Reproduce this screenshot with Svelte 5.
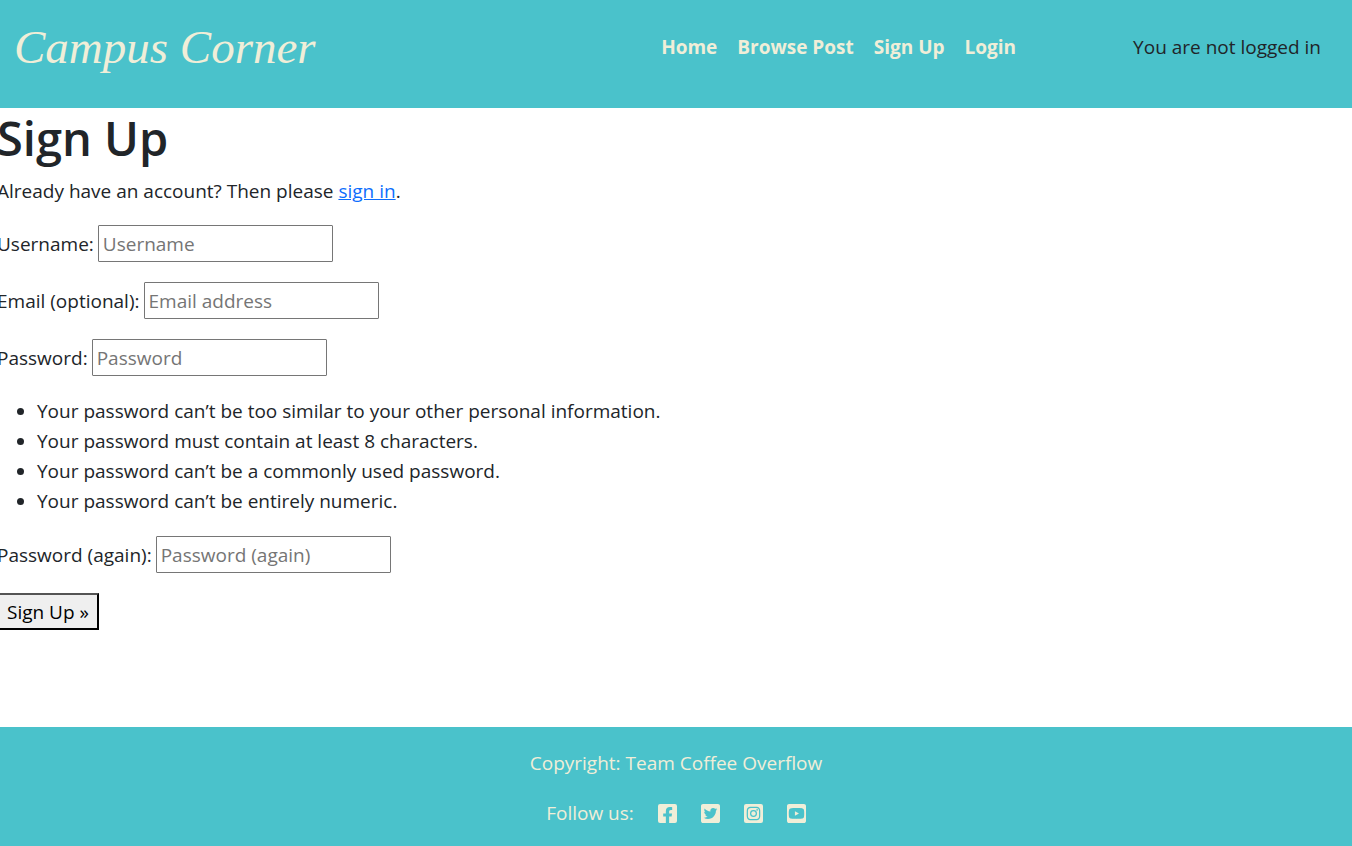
<script>
  const navLinks = ['Home', 'Browse Post', 'Sign Up', 'Login'];

  const passwordRules = [
    'Your password can’t be too similar to your other personal information.',
    'Your password must contain at least 8 characters.',
    'Your password can’t be a commonly used password.',
    'Your password can’t be entirely numeric.'
  ];

  const socials = [
    {
      name: 'Facebook',
      path: 'M400 32H48A48 48 0 0 0 0 80v352a48 48 0 0 0 48 48h137.25V327.69h-63V256h63v-54.64c0-62.15 37-96.48 93.67-96.48 27.14 0 55.52 4.84 55.52 4.84v61h-31.27c-30.81 0-40.42 19.12-40.42 38.73V256h68.78l-11 71.69h-57.78V480H400a48 48 0 0 0 48-48V80a48 48 0 0 0-48-48z'
    },
    {
      name: 'Twitter',
      path: 'M400 32H48C21.5 32 0 53.5 0 80v352c0 26.5 21.5 48 48 48h352c26.5 0 48-21.5 48-48V80c0-26.5-21.5-48-48-48zm-48.9 158.8c.2 2.8.2 5.7.2 8.5 0 86.7-66 186.6-186.6 186.6-37.2 0-71.7-10.8-100.7-29.4 5.3.6 10.4.8 15.8.8 30.7 0 58.9-10.4 81.4-28-28.8-.6-53-19.5-61.3-45.5 10.1 1.5 19.2 1.5 29.6-1.2-30-6.1-52.5-32.5-52.5-64.4v-.8c8.7 4.9 18.9 7.9 29.6 8.3a65.447 65.447 0 0 1-29.2-54.6c0-12.2 3.2-23.4 8.9-33.1 32.3 39.8 80.8 65.8 135.2 68.6-9.3-44.5 24-80.6 64-80.6 18.9 0 35.9 7.9 47.9 20.7 14.8-2.8 29-8.3 41.6-15.8-4.9 15.2-15.2 28-28.8 36.1 13.2-1.4 26-5.1 37.8-10.2-8.9 13.1-20.1 24.7-32.9 34z'
    },
    {
      name: 'Instagram',
      path: 'M224,202.66A53.34,53.34,0,1,0,277.36,256,53.38,53.38,0,0,0,224,202.66Zm124.71-41a54,54,0,0,0-30.41-30.41c-21-8.29-71-6.43-94.3-6.43s-73.25-1.93-94.31,6.43a54,54,0,0,0-30.41,30.41c-8.28,21-6.43,71.05-6.43,94.33S91,329.26,99.32,350.33a54,54,0,0,0,30.41,30.41c21,8.29,71,6.43,94.31,6.43s73.24,1.93,94.3-6.43a54,54,0,0,0,30.41-30.41c8.35-21,6.43-71.05,6.43-94.33S357.1,182.74,348.75,161.67ZM224,338a82,82,0,1,1,82-82A81.9,81.9,0,0,1,224,338Zm85.38-148.3a19.14,19.14,0,1,1,19.13-19.14A19.1,19.1,0,0,1,309.42,189.74ZM400,32H48A48,48,0,0,0,0,80V432a48,48,0,0,0,48,48H400a48,48,0,0,0,48-48V80A48,48,0,0,0,400,32ZM382.88,322c-1.29,25.63-7.14,48.34-25.85,67s-41.4,24.63-67,25.85c-26.41,1.49-105.59,1.49-132,0-25.63-1.29-48.26-7.15-67-25.85s-24.63-41.42-25.85-67c-1.49-26.42-1.49-105.61,0-132,1.29-25.63,7.07-48.34,25.85-67s41.47-24.56,67-25.78c26.41-1.49,105.59-1.49,132,0,25.63,1.29,48.33,7.15,67,25.85s24.63,41.42,25.85,67.05C384.37,216.44,384.37,295.56,382.88,322Z'
    },
    {
      name: 'YouTube',
      path: 'M186.8 202.1l95.2 54.1-95.2 54.1V202.1zM448 80v352c0 26.5-21.5 48-48 48H48c-26.5 0-48-21.5-48-48V80c0-26.5 21.5-48 48-48h352c26.5 0 48 21.5 48 48zm-42 176.3s0-59.6-7.6-88.2c-4.2-15.8-16.5-28.2-32.2-32.4C337.9 128 224 128 224 128s-113.9 0-142.2 7.7c-15.7 4.2-28 16.6-32.2 32.4-7.6 28.5-7.6 88.2-7.6 88.2s0 59.6 7.6 88.2c4.2 15.8 16.5 27.7 32.2 31.9C110.1 384 224 384 224 384s113.9 0 142.2-7.7c15.7-4.2 28-16.1 32.2-31.9 7.6-28.5 7.6-88.1 7.6-88.1z'
    }
  ];
</script>

<div class="page">
  <header>
    <a class="brand" href="#home">Campus Corner</a>
    <nav>
      {#each navLinks as link}
        <a href="#{link}">{link}</a>
      {/each}
    </nav>
    <span class="status">You are not logged in</span>
  </header>

  <main>
    <h1>Sign Up</h1>
    <p>Already have an account? Then please <a href="#login">sign in</a>.</p>

    <form onsubmit={(event) => event.preventDefault()}>
      <div class="field">
        <label for="username">Username:</label>
        <input id="username" type="text" placeholder="Username" />
      </div>
      <div class="field">
        <label for="email">Email (optional):</label>
        <input id="email" type="email" placeholder="Email address" />
      </div>
      <div class="field">
        <label for="password1">Password:</label>
        <input id="password1" type="password" placeholder="Password" />
      </div>
      <ul>
        {#each passwordRules as rule}
          <li>{rule}</li>
        {/each}
      </ul>
      <div class="field">
        <label for="password2">Password (again):</label>
        <input id="password2" type="password" placeholder="Password (again)" />
      </div>
      <button type="submit">Sign Up »</button>
    </form>
  </main>

  <footer>
    <div>Copyright: Team Coffee Overflow</div>
    <div class="follow">
      <span>Follow us:</span>
      {#each socials as social}
        <a href="#{social.name}" aria-label={social.name}>
          <svg viewBox="0 32 448 448" aria-hidden="true"><path d={social.path} /></svg>
        </a>
      {/each}
    </div>
  </footer>
</div>

<style>
  :global(body) {
    margin: 0;
    background: #fff;
  }

  .page {
    display: flex;
    flex-direction: column;
    min-height: 100vh;
    overflow-x: hidden;
    color: #212529;
    font-family: 'Segoe UI', 'Open Sans', sans-serif;
    font-size: 19px;
    line-height: 30px;
  }

  header {
    display: flex;
    align-items: center;
    padding: 12px 31px 26px 14px;
    background: #4ac2cb;
  }

  .brand {
    margin-right: auto;
    color: #f0eed8;
    font: italic 47px/70px 'Liberation Serif', serif;
    text-decoration: none;
  }

  nav {
    display: flex;
    gap: 20px;
    margin-right: 117px;
  }

  nav a {
    color: #f0eed8;
    font-weight: 700;
    text-decoration: none;
  }

  main {
    flex: 1;
    margin: 0 -3px;
  }

  h1 {
    margin: 0 0 8px;
    font-size: 47px;
    font-weight: 600;
    line-height: 60px;
  }

  p {
    margin: 0 0 19px;
  }

  p a {
    color: #0d6efd;
  }

  form {
    display: flex;
    flex-direction: column;
    align-items: flex-start;
    gap: 20px;
  }

  .field {
    display: flex;
    align-items: center;
    gap: 4px;
  }

  input {
    box-sizing: border-box;
    width: 235px;
    height: 37px;
    padding: 1px 4px;
    border: 1px solid #767676;
    border-radius: 1px;
    background: #fff;
    color: #212529;
    font: inherit;
  }

  input::placeholder {
    color: #757575;
  }

  ul {
    margin: 0;
    padding-left: 40px;
  }

  button {
    height: 37px;
    padding: 1px 8px;
    border: 2px outset #000;
    background: #efefef;
    color: #000;
    font: inherit;
  }

  footer {
    display: flex;
    flex-direction: column;
    align-items: center;
    gap: 20px;
    padding: 21px 0 18px;
    background: #4ac2cb;
    color: #f0eed8;
  }

  .follow {
    display: flex;
    align-items: center;
    gap: 24px;
  }

  .follow a {
    display: flex;
  }

  svg {
    width: 19px;
    height: 19px;
    fill: #f0eed8;
  }
</style>
